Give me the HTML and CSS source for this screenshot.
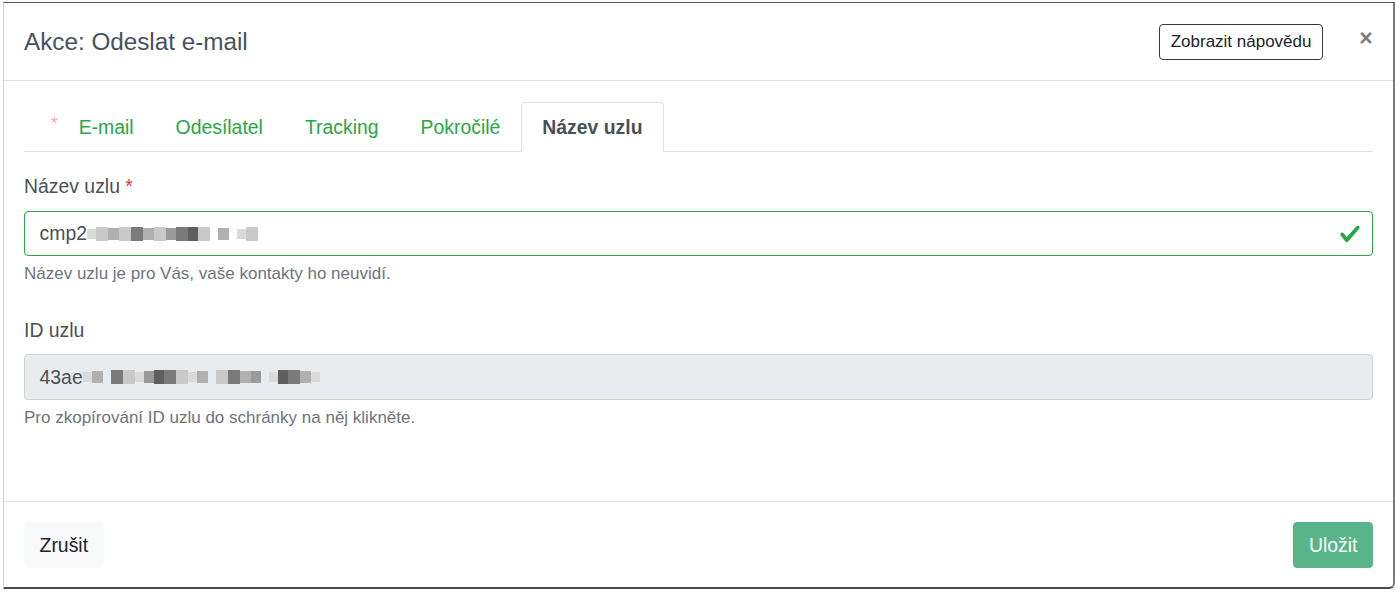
FILE: index.html
```html
<!DOCTYPE html>
<html lang="cs">
<head>
<meta charset="utf-8">
<title>Akce: Odeslat e-mail</title>
<link rel="stylesheet" href="styles.css">
</head>
<body>
<div class="modal">
  <header class="modal-header">
    <h5 class="modal-title">Akce: Odeslat e-mail</h5>
    <button class="btn-help" type="button">Zobrazit nápovědu</button>
    <button class="close" type="button">×</button>
  </header>
  <div class="modal-body">
    <ul class="tabs">
      <li><a class="tab"><span class="req">*</span>E-mail</a></li>
      <li><a class="tab">Odesílatel</a></li>
      <li><a class="tab">Tracking</a></li>
      <li><a class="tab">Pokročilé</a></li>
      <li><a class="tab active">Název uzlu</a></li>
    </ul>
    <div class="pane">
      <div class="group">
        <label class="label">Název uzlu <span class="star">*</span></label>
        <div class="input valid">
          <span class="val">cmp2</span>
          <span class="pix"><i class="b4"></i><i class="b1"></i><i class="b6"></i><i class="b1"></i><i class="b3"></i><i class="b6"></i><i class="b1"></i><i class="b2"></i><i class="b3"></i><i class="b5"></i><i class="b1"></i><i class="gap"></i><i class="b6"></i><i class="gap"></i><i class="b4"></i><i class="b1"></i></span>
          <svg class="check" viewBox="0 0 8 8" width="22" height="22"><path fill="#28a745" d="M2.3 6.73L.6 4.530c-.4-1.04.46-1.4 1.1-.8l1.1 1.4 3.4-3.8c.6-.63 1.6-.27 1.2.7l-4 4.6c-.43.5-.8.4-1.1.1z"/></svg>
        </div>
        <small class="help">Název uzlu je pro Vás, vaše kontakty ho neuvidí.</small>
      </div>
      <div class="group last">
        <label class="label">ID uzlu</label>
        <div class="input readonly">
          <span class="val">43ae</span>
          <span class="pix"><i class="b4"></i><i class="b6"></i><i class="gap"></i><i class="b3"></i><i class="b1"></i><i class="b4"></i><i class="b2"></i><i class="b5"></i><i class="b3"></i><i class="b1"></i><i class="b4"></i><i class="b6"></i><i class="gap"></i><i class="b1"></i><i class="b3"></i><i class="b6"></i><i class="b2"></i><i class="gap"></i><i class="b4"></i><i class="b5"></i><i class="b3"></i><i class="b6"></i><i class="b4"></i></span>
        </div>
        <small class="help">Pro zkopírování ID uzlu do schránky na něj klikněte.</small>
      </div>
    </div>
  </div>
  <footer class="modal-footer">
    <button class="btn btn-light" type="button">Zrušit</button>
    <button class="btn btn-save" type="button">Uložit</button>
  </footer>
</div>
</body>
</html>
```
FILE: styles.css
```css
html, body {
  margin: 0;
  padding: 0;
  background: #ffffff;
}
body {
  font-family: "Liberation Sans", Arial, sans-serif;
  font-size: 19.4px;
  line-height: 1.5;
  color: #212529;
}
.modal {
  margin: 2px 0 0 3px;
  width: 1392px;
  background: #fff;
  border-top: 1px solid #555;
  border-left: 1px solid #d0d0d0;
  border-right: 2px solid #7a7a7a;
  border-bottom: 2px solid #4a4a4a;
  border-bottom-right-radius: 6px;
  box-sizing: border-box;
}
.modal-header {
  display: flex;
  align-items: center;
  padding: 21px 20px 20px 20px;
  border-bottom: 1px solid #dee2e6;
  height: 78px;
  box-sizing: border-box;
}
.modal-title {
  margin: 0;
  flex: 1;
  font-size: 24.25px;
  font-weight: 400;
  line-height: 36px;
  color: #455261;
}
.btn-help {
  font-family: inherit;
  font-size: 17px;
  line-height: 24px;
  height: 36px;
  padding: 5px 10.5px;
  background: #fff;
  color: #212529;
  border: 1px solid #343a40;
  border-radius: 4px;
  box-sizing: border-box;
}
.close {
  margin-left: 36px;
  padding: 0;
  border: 0;
  background: transparent;
  font-family: inherit;
  font-size: 23px;
  font-weight: 700;
  line-height: 1;
  color: #7d7d7d;
  width: 14px;
  margin-top: -8px;
}
.modal-body {
  padding: 21px 20px 71px 20px;
}
.tabs {
  display: flex;
  list-style: none;
  margin: 0;
  padding: 0;
  border-bottom: 1px solid #dee2e6;
}
.tab {
  display: block;
  padding: 9.7px 20px;
  line-height: 29.1px;
  border: 1px solid transparent;
  border-top-left-radius: 4px;
  border-top-right-radius: 4px;
  margin-bottom: -1px;
  color: #28a745;
}
.tab.active {
  color: #495057;
  font-weight: 700;
  background: #fff;
  border-color: #dee2e6 #dee2e6 #fff;
}
.req {
  display: inline-block;
  font-size: 17px;
  line-height: 1;
  color: #f0a6b1;
  vertical-align: 5px;
  margin-left: 6px;
  margin-right: 21px;
}
.pane {
  padding-top: 19.5px;
}
.group {
  margin-bottom: 29px;
}
.group.last {
  margin-bottom: 0;
}
.label {
  display: block;
  margin-bottom: 9.7px;
  color: #495057;
  line-height: 29.1px;
}
.star {
  color: #dc3545;
}
.input {
  display: flex;
  align-items: center;
  height: 45.6px;
  box-sizing: border-box;
  padding: 0 11px 0 14.55px;
  border: 1px solid #ced4da;
  border-radius: 4px;
  color: #495057;
}
.input.valid {
  border-color: #28a745;
}
.input.readonly {
  background: #e9ecef;
}
.val {
  line-height: 29px;
}
.pix {
  display: inline-flex;
  align-items: center;
  height: 16px;
}
.pix i {
  display: inline-block;
  height: 14px;
}
.pix .b1 { width: 12px; background: #c9c9c9; }
.pix .b2 { width: 10px; background: #9a9a9a; height: 12px; }
.pix .b3 { width: 12px; background: #7a7a7a; }
.pix .b4 { width: 9px; background: #dadada; height: 10px; }
.pix .b5 { width: 10px; background: #5e5e5e; }
.pix .b6 { width: 11px; background: #b0b0b0; height: 12px; }
.pix .gap { width: 8px; height: 1px; background: transparent; }
.check {
  margin-left: auto;
}
.help {
  display: block;
  margin-top: 4.85px;
  font-size: 17px;
  line-height: 25.5px;
  color: #6c757d;
}
.modal-footer {
  display: flex;
  justify-content: space-between;
  align-items: center;
  padding: 20px 20px 19px 20px;
  border-top: 1px solid #dee2e6;
}
.btn {
  font-family: inherit;
  font-size: 19.4px;
  line-height: 29.1px;
  padding: 7.3px 14.55px;
  border: 1px solid transparent;
  border-radius: 4px;
  height: 45.6px;
  box-sizing: border-box;
}
.btn-light {
  background: #f8f9fa;
  border-color: #f8f9fa;
  color: #212529;
}
.btn-save {
  background: #5ab48a;
  border-color: #5ab48a;
  color: #fff;
}
```
